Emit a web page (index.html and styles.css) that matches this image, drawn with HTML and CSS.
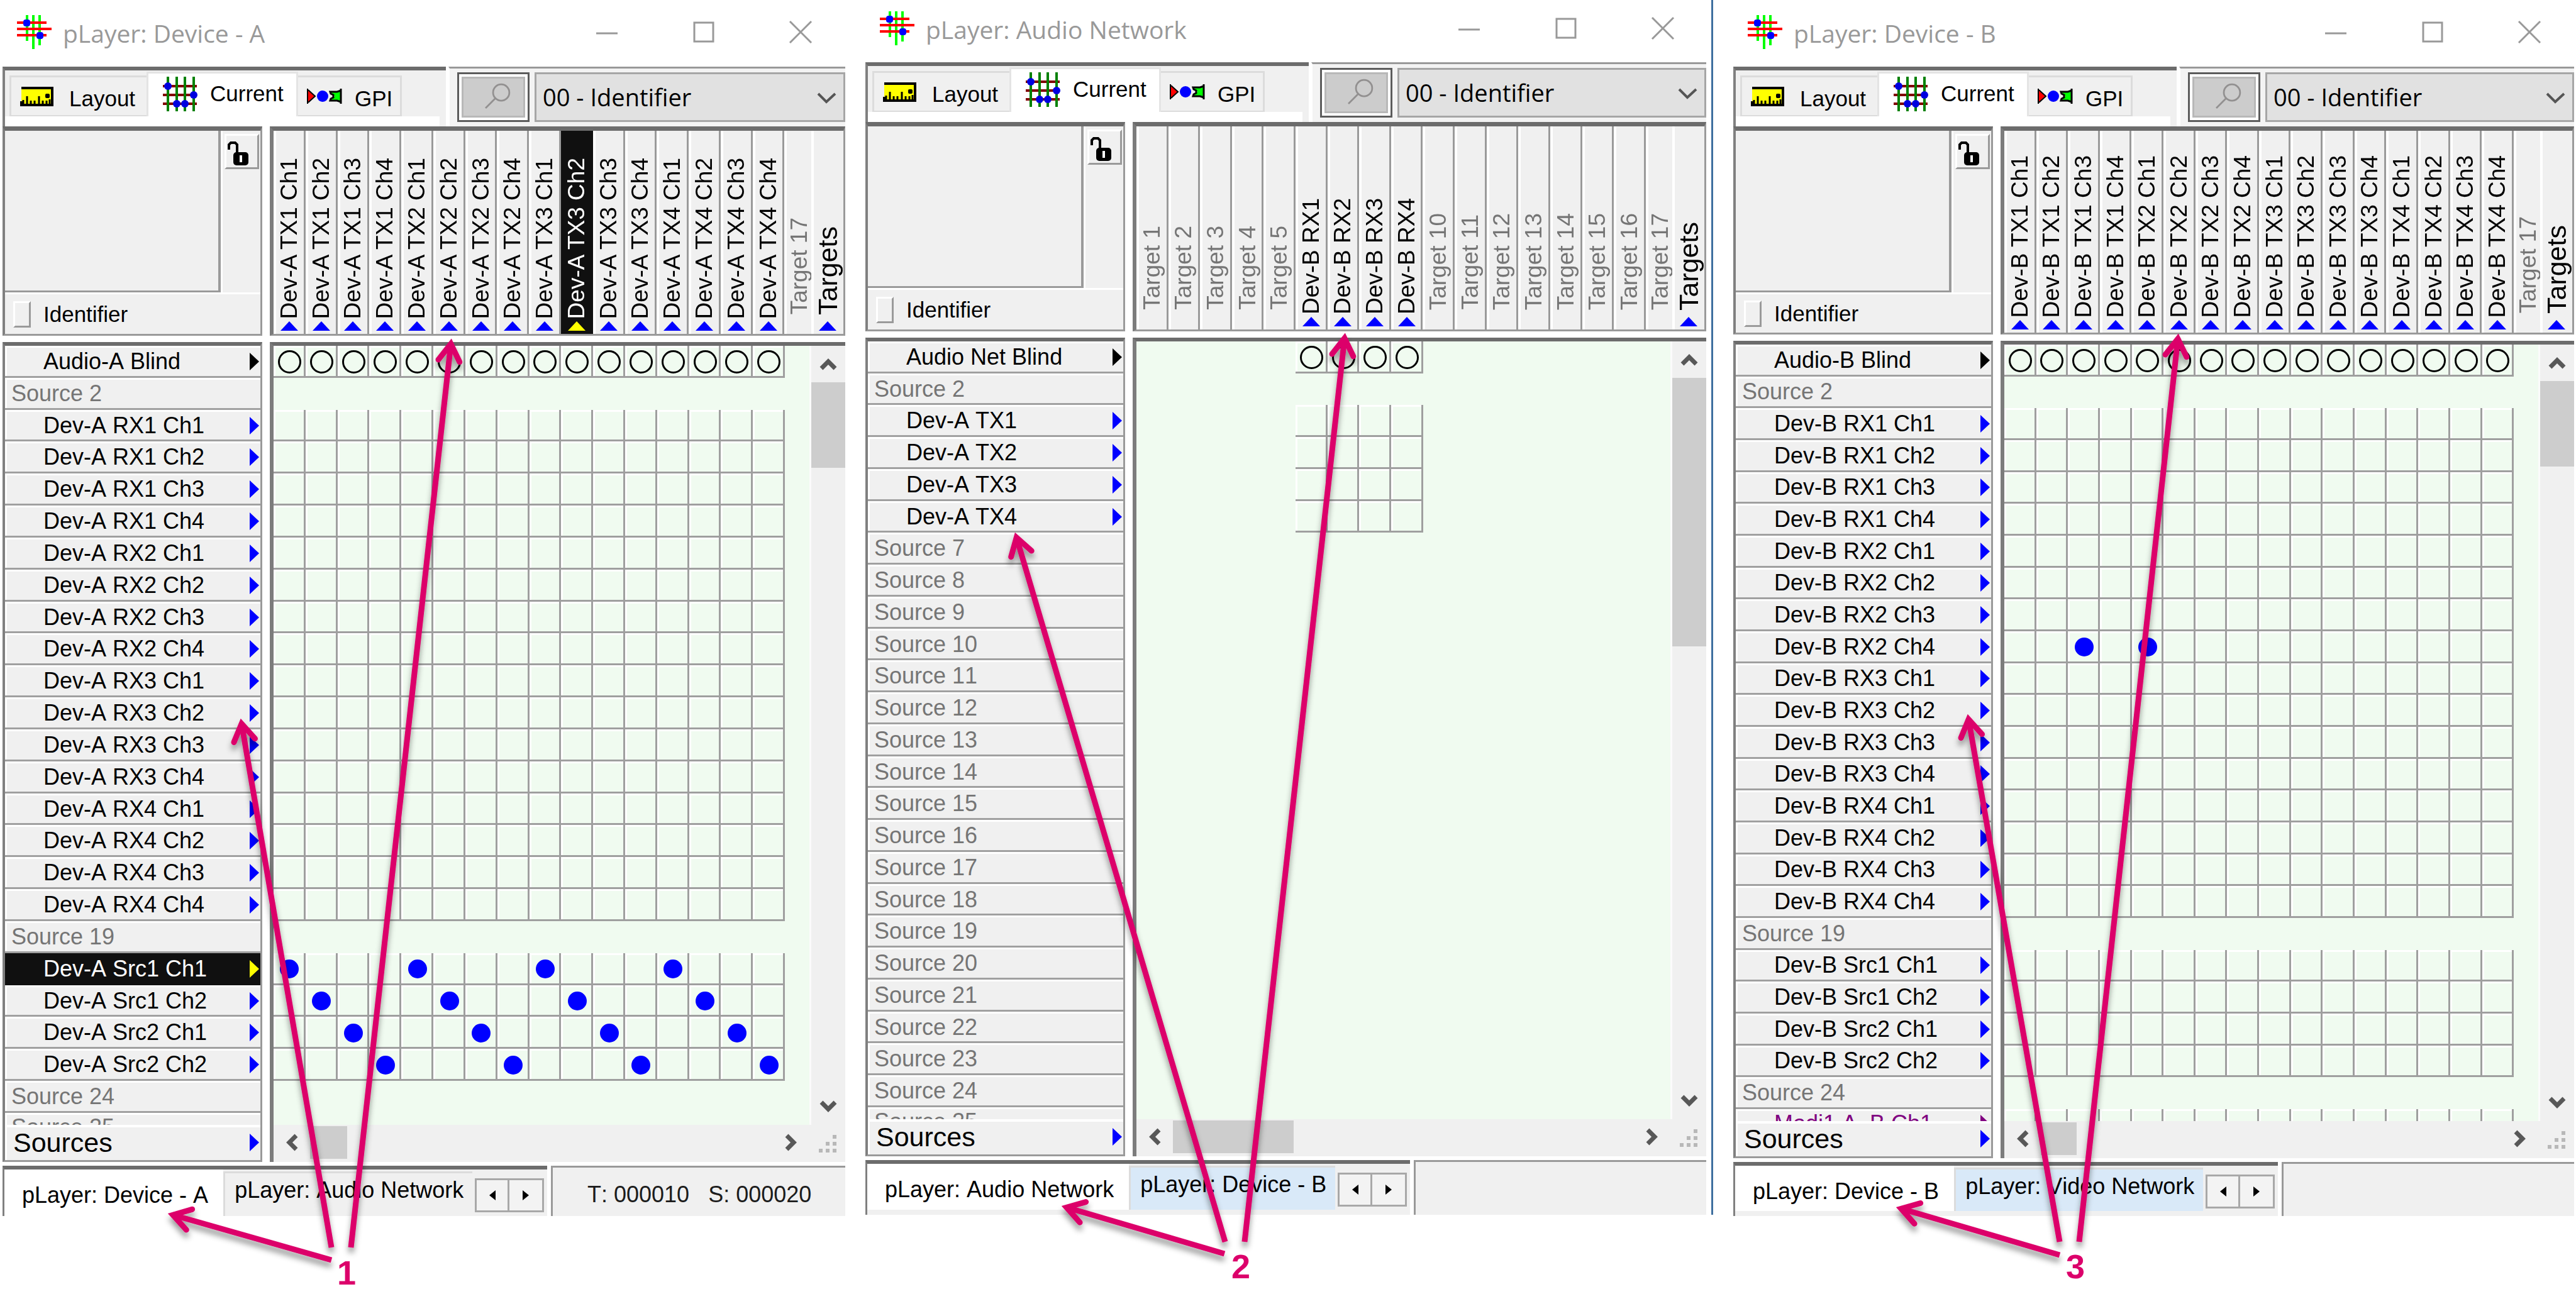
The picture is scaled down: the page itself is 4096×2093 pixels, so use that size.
FILE: index.html
```html
<!DOCTYPE html>
<html lang="en">
<head>
<meta charset="utf-8">
<title>pLayer</title>
<link rel="stylesheet" href="styles.css">
</head>
<body>
<main class="desk" id="desk"></main>

<svg class="callouts" viewBox="0 0 4096 2093" preserveAspectRatio="none" aria-hidden="true">
  <defs>
    <marker id="head" markerUnits="userSpaceOnUse" markerWidth="60" markerHeight="60" viewBox="-50 -30 60 60" refX="-8" refY="0" orient="auto">
      <path class="barbs" d="M-36 -17 L-9 0 L-36 17"/>
    </marker>
    <filter id="shade" filterUnits="userSpaceOnUse" x="0" y="0" width="4096" height="2093">
      <feDropShadow dx="0" dy="8" stdDeviation="5" flood-color="#000" flood-opacity="0.4"/>
    </filter>
  </defs>
  <g class="arrows" filter="url(#shade)">
    <line x1="527" y1="1984" x2="384" y2="1150"/>
    <line x1="558" y1="1984" x2="717" y2="546"/>
    <line x1="527" y1="2004" x2="274" y2="1932"/>
    <line x1="1948" y1="1975" x2="1616" y2="854"/>
    <line x1="1979" y1="1975" x2="2138" y2="537"/>
    <line x1="1947" y1="1994" x2="1695" y2="1920"/>
    <line x1="3275" y1="1975" x2="3130" y2="1143"/>
    <line x1="3306" y1="1975" x2="3463" y2="538"/>
    <line x1="3275" y1="1996" x2="3022" y2="1922"/>
  </g>
  <g class="numbers">
    <text x="551" y="2043">1</text>
    <text x="1973" y="2033">2</text>
    <text x="3300" y="2033">3</text>
  </g>
</svg>
<script src="script.js"></script>
</body>
</html>
```
FILE: styles.css
```css
* { box-sizing: border-box; }

body {
  margin: 0;
  background: #fff;
  color: #000;
  font-family: "Liberation Sans", Arial, sans-serif;
  font-size: 36px;
  line-height: 42px;
  font-kerning: none;
  position: relative;
}

button, select {
  font: inherit;
  font-kerning: inherit;
  color: inherit;
  margin: 0;
  padding: 0;
  border: 0;
  border-radius: 0;
  background: none;
}

svg { display: block; overflow: visible; flex: none; }
ul { list-style: none; margin: 0; padding: 0; }

.desk {
  min-height: 100vh;
  padding: 0 0 159px 4px;
  display: grid;
  grid-template-columns: minmax(0, 1344fr) minmax(0, 1352fr) minmax(0, 1340fr);
  column-gap: 28px;
}

/* ---- window frame ---- */
.window {
  --title-h: 106px;
  --head-h: 343px;
  --status-h: 80px;
  --edge: 4px;
  display: flex;
  flex-direction: column;
  padding-right: var(--edge);
}
.window-b { --title-h: 99px; --status-h: 87px; --edge: 8px; border-right: 3px solid #3f6f9f; margin: 0 4px 2px 0; }
.window-c { --head-h: 341px; --status-h: 86px; --edge: 3px; }

.titlebar {
  height: var(--title-h);
  display: flex;
  align-items: center;
  padding: 0 54px 4px 23px;
  color: #999;
}
.titlebar h1 {
  margin: 0 auto 0 18px;
  padding-top: 4px;
  font: 400 39px/48px "Open Sans", "Noto Sans", sans-serif;
}
.window-b .titlebar { padding-right: 52px; padding-bottom: 10px; }
.app-icon { width: 55px; height: 54px; }
.caption-buttons { display: flex; gap: 120px; }
.caption-buttons svg { width: 34px; height: 34px; fill: none; stroke: #999; stroke-width: 3; }

/* ---- toolbar ---- */
.toolbar { height: 95px; display: flex; gap: 4px; }
.tabs-box {
  width: 705px;
  border-top: 6px solid #6c6c6c;
  border-left: 4px solid #808080;
  background: #f0f0f0;
  display: flex;
  flex-direction: column;
}
.tabs { flex: 1; display: flex; align-items: flex-end; padding-left: 7px; }
.tab {
  height: 65px;
  display: flex;
  align-items: center;
  border: 3px solid #dcdcdc;
  border-bottom-width: 2px;
  background: #f0f0f0;
  font-size: 35px;
}
.tab svg + span { padding-top: 8px; }
.tab-layout { width: 218px; padding-left: 16px; gap: 25px; border-right: 0; }
.tab-current { width: 241px; height: 71px; padding: 0 0 4px 23px; gap: 21px; background: #fff; border-bottom: 0; border-color: #e4e4e4; }
.tab-current svg + span { padding-top: 0; }
.tab-gpi { width: 165px; padding-left: 14px; gap: 21px; border-left: 0; }
.tab-page { height: 16px; margin-right: 10px; background: #fff; }
.find {
  flex: 1;
  display: flex;
  gap: 8px;
  padding: 6px 0 7px 12px;
  border-top: 3px solid #999;
  border-left: 2px solid #fff;
  background: #f3f3f3;
}
.find-button {
  width: 115px;
  padding: 4px;
  border: 3px solid #5c5c5c;
  background: #fff;
}
.find-button svg { width: 100%; height: 100%; border: 3px solid #b8b8b8; background: #ccc; fill: none; stroke: #929090; stroke-width: 3; }
.level { flex: 1; position: relative; display: flex; }
.level select {
  width: 100%;
  appearance: none;
  border: 3px solid #a6a6a6;
  background: #e1e1e1;
  padding: 0 0 2px 10px;
  font: 400 38px/48px "Open Sans", "Noto Sans", sans-serif;
}
.level svg { position: absolute; right: 15px; top: 33px; width: 29px; height: 16px; fill: none; stroke: #555; stroke-width: 4; pointer-events: none; }

/* ---- target header ---- */
.head { height: var(--head-h); padding-bottom: 10px; display: flex; gap: 12px; }
.corner {
  width: 413px;
  border: 3px solid #9a9a9a;
  border-top: 7px solid #6c6c6c;
  border-left: 4px solid #808080;
  background: #f0f0f0;
  display: grid;
  grid-template-columns: 343px 1fr;
  grid-template-rows: 257px 1fr;
}
.preview { border-right: 4px solid #9a9a9a; border-bottom: 3px solid #9a9a9a; }
.lock-cell { border-left: 3px solid #fff; padding: 5px 0 0 3px; }
.lock-button {
  width: 55px;
  height: 56px;
  padding: 5px 0 0 2px;
  border: 3px solid #fff;
  border-right-color: #9a9a9a;
  border-bottom-color: #9a9a9a;
}
.lock-button svg { width: 33px; height: 38px; }
.identifier {
  grid-column: 1 / 3;
  border-top: 3px solid #fff;
  display: flex;
  align-items: center;
  padding: 0 0 0 13px;
  gap: 20px;
  font-size: 35px;
}
.identifier i { width: 28px; height: 42px; border: 3px solid #fff; border-right-color: #9a9a9a; border-bottom-color: #9a9a9a; }
.targets {
  flex: 1;
  display: grid;
  grid-template-columns: repeat(16, minmax(0, 51fr)) minmax(0, 43fr) minmax(0, 51fr);
  border-top: 7px solid #6c6c6c;
  border-left: 6px solid #7c7c7c;
  border-right: 3px solid #9a9a9a;
  border-bottom: 3px solid #9a9a9a;
  font-size: 37px;
}
.target {
  display: flex;
  flex-direction: column;
  align-items: center;
  justify-content: flex-end;
  gap: 4px;
  padding: 0 2px 5px 0;
  overflow: hidden;
  background: #f0f0f0;
  border-left: 4px solid #fff;
  border-right: 3px solid #9a9a9a;
}
.target span { writing-mode: vertical-rl; transform: rotate(180deg); white-space: nowrap; line-height: 42px; }
.target .tri { width: 28px; height: 15px; }
.target-empty { color: #757575; padding-bottom: 31px; }
.target:nth-child(17) { border-right: 0; padding: 0 0 31px; }
.target-selected { background: #101010; color: #fff; border-color: #101010; }
.target-all { font-size: 43px; border-right: 0; gap: 10px; padding-right: 4px; }
.target-all span { line-height: 48px; }

/* ---- matrix ---- */
.body { flex: 1; display: flex; gap: 12px; }
.sources {
  width: 413px;
  border: 3px solid #9a9a9a;
  border-top: 6px solid #6c6c6c;
  border-left: 4px solid #808080;
  background: #f0f0f0;
  display: flex;
  flex-direction: column;
}
.source-list {
  flex: 1 1 0;
  min-height: 0;
  overflow: hidden;
  display: grid;
  grid-template-rows: repeat(24, minmax(0, 8fr)) minmax(0, 3fr);
}
.source {
  overflow: hidden;
  display: flex;
  align-items: center;
  padding: 2px 2px 0 61px;
  border-bottom: 3px solid #a0a0a0;
  box-shadow: inset 3px 3px 0 #fff;
}
.source:nth-child(25) { align-items: flex-start; border-bottom: 0; }
.source span, .all-sources span { flex: 1; white-space: nowrap; }
.source .tri, .all-sources .tri { width: 15px; height: 28px; }
.source:nth-child(25) .tri { margin-top: 7px; }
.source-empty { color: #757575; padding-left: 10px; }
.source-selected { background: #101010; border-color: #101010; box-shadow: none; color: #fff; }
.source-monitor { color: #800080; }
.all-sources {
  height: 56px;
  display: flex;
  align-items: center;
  text-align: left;
  padding: 0 2px 5px 10px;
  border-top: 4px solid #fff;
  border-left: 3px solid #fff;
  font-size: 43px;
}

.tri { fill: #00f; }
.tri-black { fill: #000; }
.tri-yellow { fill: #ff0; }
.tri-purple { fill: #800080; }

.view {
  flex: 1;
  display: grid;
  grid-template-columns: minmax(0, 1fr) 57px;
  grid-template-rows: minmax(0, 1fr) 59px;
  border-top: 6px solid #6c6c6c;
  border-left: 6px solid #7c7c7c;
  background: #f0f0f0;
}
.matrix {
  overflow: hidden;
  display: grid;
  grid-template-columns: repeat(16, minmax(0, 51fr)) minmax(0, 39fr);
  grid-template-rows: repeat(24, minmax(0, 8fr)) minmax(0, 3fr);
  background: #f0fbf0;
}
.cell {
  display: flex;
  align-items: center;
  justify-content: center;
  padding: 3px 0 0 3px;
  border-right: 3px solid #9f9f9f;
  border-bottom: 3px solid #9f9f9f;
  box-shadow: inset 3px 3px 0 #fff;
}
.cell-clipped { border-bottom: 0; }
.dot { width: 30px; height: 30px; border-radius: 50%; background: #00f; }
.ring { width: 37px; height: 37px; border-radius: 50%; border: 3px solid #000; }

.scroll { display: flex; align-items: center; }
.scroll button { display: flex; align-items: center; justify-content: center; }
.scroll svg { fill: none; stroke: #585858; stroke-width: 7; }
.scroll-v { flex-direction: column; border-left: 3px solid #fbfbfb; }
.scroll-v button { width: 54px; height: 58px; }
.scroll-v .thumb { width: 54px; background: #cdcdcd; margin-bottom: auto; }
.scroll-h { padding-bottom: 3px; }
.scroll-h button { width: 58px; height: 56px; }
.scroll-h .thumb { height: 52px; background: #cdcdcd; margin-right: auto; }
.grip { align-self: center; justify-self: center; width: 28px; height: 28px; fill: #b8b8b8; }

/* ---- status bar ---- */
.status { height: var(--status-h); margin-top: 6px; display: flex; gap: 6px; }
.pages {
  width: 866px;
  border-top: 6px solid #6c6c6c;
  border-left: 3px solid #808080;
  background: #f0f0f0;
  display: flex;
}
.page-tab { align-self: stretch; display: flex; align-items: flex-start; white-space: nowrap; }
.page-active { background: #fff; padding: 20px 24px 0 28px; }
.page-other { margin-top: 3px; border-top: 3px solid #dcdcdc; border-left: 3px solid #dcdcdc; padding: 6px 14px 0 15px; }
.page-lit { background: #d9e9f8; }
.window-b .page-tab, .window-c .page-tab { margin-bottom: 8px; }
.page-nav { display: flex; margin: 14px auto 0 4px; height: 54px; }
.page-nav button { width: 55px; border: 3px solid #a8a8a8; background: #f3f3f3; display: flex; align-items: center; justify-content: center; }
.page-nav button + button { border-left: 0; }
.page-nav svg { width: 10px; height: 16px; fill: #000; }
.counts {
  flex: 1;
  border-top: 3px solid #999;
  border-left: 3px solid #999;
  background: #f0f0f0;
  display: flex;
  gap: 30px;
  padding: 22px 0 0 55px;
  color: #1c1c1c;
}

/* ---- callouts ---- */
.callouts { position: absolute; left: 0; top: 0; width: 100%; height: 100%; pointer-events: none; }
.arrows line { stroke: #dc006b; stroke-width: 9; marker-end: url(#head); }
.barbs { fill: none; stroke: #dc006b; stroke-width: 9; stroke-linecap: round; stroke-linejoin: miter; }
.numbers text { fill: #dc006b; font-size: 54px; font-weight: 700; text-anchor: middle; }
```
FILE: script.js
```js
const four = [1, 2, 3, 4];
const channels = (dev, kind) => four.flatMap(n => four.map(c => `${dev} ${kind}${n} Ch${c}`));
const numbered = (word, from, to) => Array.from({ length: to - from + 1 }, (_, i) => `${word} ${from + i}`);
const sourceMix = dev => [1, 2].flatMap(n => [1, 2].map(c => `${dev} Src${n} Ch${c}`));

const windows = [
  {
    key: 'a', title: 'Device - A',
    targets: [...channels('Dev-A', 'TX'), 'Target 17'],
    sources: ['Audio-A Blind', 'Source 2', ...channels('Dev-A', 'RX'), 'Source 19', ...sourceMix('Dev-A'), 'Source 24', 'Source 25'],
    pickedTarget: 10, pickedSource: 20,
    dots: Array.from({ length: 16 }, (_, i) => [20 + i % 4, i + 1]),
    thumbV: 136, thumbH: 59,
    other: 'Audio Network', lit: false, counts: ['T: 000010', 'S: 000020']
  },
  {
    key: 'b', title: 'Audio Network',
    targets: [...numbered('Target', 1, 5), ...four.map(n => `Dev-B RX${n}`), ...numbered('Target', 10, 17)],
    sources: ['Audio Net Blind', 'Source 2', ...four.map(n => `Dev-A TX${n}`), ...numbered('Source', 7, 25)],
    dots: [],
    thumbV: 427, thumbH: 192,
    other: 'Device - B', lit: true, counts: []
  },
  {
    key: 'c', title: 'Device - B',
    targets: [...channels('Dev-B', 'TX'), 'Target 17'],
    sources: ['Audio-B Blind', 'Source 2', ...channels('Dev-B', 'RX'), 'Source 19', ...sourceMix('Dev-B'), 'Source 24', 'Modi1 A_B Ch1'],
    dots: [[10, 3], [10, 5]],
    thumbV: 136, thumbH: 57,
    other: 'Video Network', lit: true, counts: []
  }
];

const appIcon = `<svg class="app-icon" viewBox="0 0 55 54">
  <path d="M16 0V41M26 0V54M36 0V48" stroke="#0f0" stroke-width="4"/>
  <path d="M0 12H47M0 22H55M0 32H47" stroke="#f00" stroke-width="4"/>
  <rect x="10" y="7" width="11" height="11" rx="4" fill="#00f"/><rect x="31" y="27" width="11" height="11" rx="4" fill="#00f"/></svg>`;
const rulerIcon = `<svg width="51" height="31" viewBox="0 0 51 31"><rect width="51" height="31" fill="#ff0"/>
  <path d="M0 2H49V29H0V23" fill="none" stroke="#000" stroke-width="4"/>
  <path d="M3 21V29M9 15V29M15 22V29M21 22V29M28 15V29M34 22V29M40 22V29M45 20V29" stroke="#000" stroke-width="3"/>
  <rect x="38" y="11" width="7" height="7" rx="2"/></svg>`;
const matrixIcon = `<svg width="54" height="55" viewBox="0 0 54 55">
  <path d="M0 15H54M0 29H54M0 43H54" stroke="#800000" stroke-width="4"/>
  <path d="M8 0V55M22 0V55M35 0V55M49 0V55" stroke="#008000" stroke-width="4"/>
  <g fill="#0000e0"><circle cx="8" cy="15" r="6"/><circle cx="49" cy="29" r="6"/><circle cx="22" cy="43" r="6"/><circle cx="35" cy="43" r="6"/></g></svg>`;
const gpiIcon = `<svg width="55" height="24" viewBox="0 0 55 24">
  <path d="M1 1L13 12L1 23Z" fill="#f00"/><path d="M1 0V24M2 2L13 12L2 22" fill="none" stroke="#000" stroke-width="2"/>
  <circle cx="25" cy="12" r="9" fill="#00f"/>
  <path d="M38 5H54V19H38L44 12Z" fill="#0f0"/><path d="M54 0V24M54 3L48 5H37L38 8L42 10V14L38 16L37 19H48L54 21" fill="none" stroke="#000" stroke-width="3"/></svg>`;
const lockIcon = `<svg viewBox="0 0 33 38"><path d="M2 13V5L5 2H12L15 5V19" fill="none" stroke="#000" stroke-width="4"/>
  <rect x="9" y="17" width="24" height="21" rx="5"/><rect x="19" y="22" width="4" height="11" fill="#fff"/></svg>`;
const findIcon = `<svg viewBox="0 0 101 64"><circle cx="64" cy="24" r="14"/><path d="M54 34L37 51"/></svg>`;

const triRight = (tone = '') => `<svg class="tri ${tone}" viewBox="0 0 15 28"><path d="M0 0L15 14L0 28Z"/></svg>`;
const triUp = (tone = '') => `<svg class="tri ${tone}" viewBox="0 0 28 15"><path d="M0 15L14 0L28 15Z"/></svg>`;
const chevron = {
  up: '<svg width="26" height="20"><path d="M2 17L13 6L24 17"/></svg>',
  down: '<svg width="26" height="20"><path d="M2 3L13 14L24 3"/></svg>',
  left: '<svg width="20" height="26"><path d="M17 2L6 13L17 24"/></svg>',
  right: '<svg width="20" height="26"><path d="M3 2L14 13L3 24"/></svg>'
};

const isEmpty = name => /^(Source|Target) \d/.test(name);

function target(name, i, w) {
  if (isEmpty(name)) return `<li class="target target-empty"><span>${name}</span></li>`;
  const picked = i + 1 === w.pickedTarget;
  return `<li class="target ${picked ? 'target-selected' : ''}"><span>${name}</span>${triUp(picked ? 'tri-yellow' : '')}</li>`;
}

function source(name, i, w) {
  if (isEmpty(name)) return `<li class="source source-empty"><span>${name}</span></li>`;
  const picked = i + 1 === w.pickedSource;
  const monitor = name.startsWith('Modi');
  const tone = picked ? 'tri-yellow' : monitor ? 'tri-purple' : i === 0 ? 'tri-black' : '';
  const kind = picked ? 'source-selected' : monitor ? 'source-monitor' : '';
  return `<li class="source ${kind}"><span>${name}</span>${triRight(tone)}</li>`;
}

function cells(w) {
  const on = new Set(w.dots.map(String));
  let out = '';
  w.sources.forEach((s, r) => w.targets.forEach((t, c) => {
    if (isEmpty(s) || isEmpty(t)) return;
    const mark = r === 0 ? '<i class="ring"></i>' : on.has(`${r + 1},${c + 1}`) ? '<i class="dot"></i>' : '';
    out += `<div class="cell ${r === 24 ? 'cell-clipped' : ''}" style="grid-area:${r + 1}/${c + 1}">${mark}</div>`;
  }));
  return out;
}

const grip = `<svg class="grip" viewBox="0 0 28 28"><path d="M22 0h6v6h-6zM11 11h6v6h-6zM22 11h6v6h-6zM0 22h6v6h-6zM11 22h6v6h-6zM22 22h6v6h-6z"/></svg>`;

const render = w => `
<section class="window window-${w.key}" aria-label="pLayer: ${w.title}">
  <header class="titlebar">${appIcon}<h1>pLayer: ${w.title}</h1>
    <div class="caption-buttons">
      <button aria-label="Minimize"><svg viewBox="0 0 34 34"><path d="M0 19H34"/></svg></button>
      <button aria-label="Maximize"><svg viewBox="0 0 34 34"><path d="M2 2H32V32H2Z"/></svg></button>
      <button aria-label="Close"><svg viewBox="0 0 34 34"><path d="M0 0L34 34M34 0L0 34"/></svg></button>
    </div>
  </header>
  <div class="toolbar">
    <div class="tabs-box">
      <div class="tabs">
        <button class="tab tab-layout">${rulerIcon}<span>Layout</span></button>
        <button class="tab tab-current">${matrixIcon}<span>Current</span></button>
        <button class="tab tab-gpi">${gpiIcon}<span>GPI</span></button>
      </div>
      <div class="tab-page"></div>
    </div>
    <div class="find">
      <button class="find-button" aria-label="Find">${findIcon}</button>
      <label class="level"><select aria-label="Level"><option>00 - Identifier</option></select>
        <svg viewBox="0 0 29 16"><path d="M1 1L14 14L28 1"/></svg></label>
    </div>
  </div>
  <div class="head">
    <div class="corner">
      <div class="preview"></div>
      <div class="lock-cell"><button class="lock-button" aria-label="Lock">${lockIcon}</button></div>
      <div class="identifier"><i></i><span>Identifier</span></div>
    </div>
    <ul class="targets">${w.targets.map((t, i) => target(t, i, w)).join('')}
      <li class="target target-all"><span>Targets</span>${triUp()}</li></ul>
  </div>
  <div class="body">
    <div class="sources">
      <ul class="source-list">${w.sources.map((s, i) => source(s, i, w)).join('')}</ul>
      <button class="all-sources"><span>Sources</span>${triRight()}</button>
    </div>
    <div class="view">
      <div class="matrix">${cells(w)}</div>
      <div class="scroll scroll-v"><button aria-label="Up">${chevron.up}</button>
        <div class="thumb" style="height:${w.thumbV}px"></div><button aria-label="Down">${chevron.down}</button></div>
      <div class="scroll scroll-h"><button aria-label="Left">${chevron.left}</button>
        <div class="thumb" style="width:${w.thumbH}px"></div><button aria-label="Right">${chevron.right}</button></div>
      ${grip}
    </div>
  </div>
  <footer class="status">
    <div class="pages">
      <button class="page-tab page-active">pLayer: ${w.title}</button>
      <button class="page-tab page-other ${w.lit ? 'page-lit' : ''}">pLayer: ${w.other}</button>
      <div class="page-nav"><button aria-label="Previous"><svg viewBox="0 0 10 16"><path d="M10 0L0 8L10 16Z"/></svg></button><button aria-label="Next"><svg viewBox="0 0 10 16"><path d="M0 0L10 8L0 16Z"/></svg></button></div>
    </div>
    <div class="counts">${w.counts.map(c => `<span>${c}</span>`).join('')}</div>
  </footer>
</section>`;

document.getElementById('desk').innerHTML = windows.map(render).join('');
```
